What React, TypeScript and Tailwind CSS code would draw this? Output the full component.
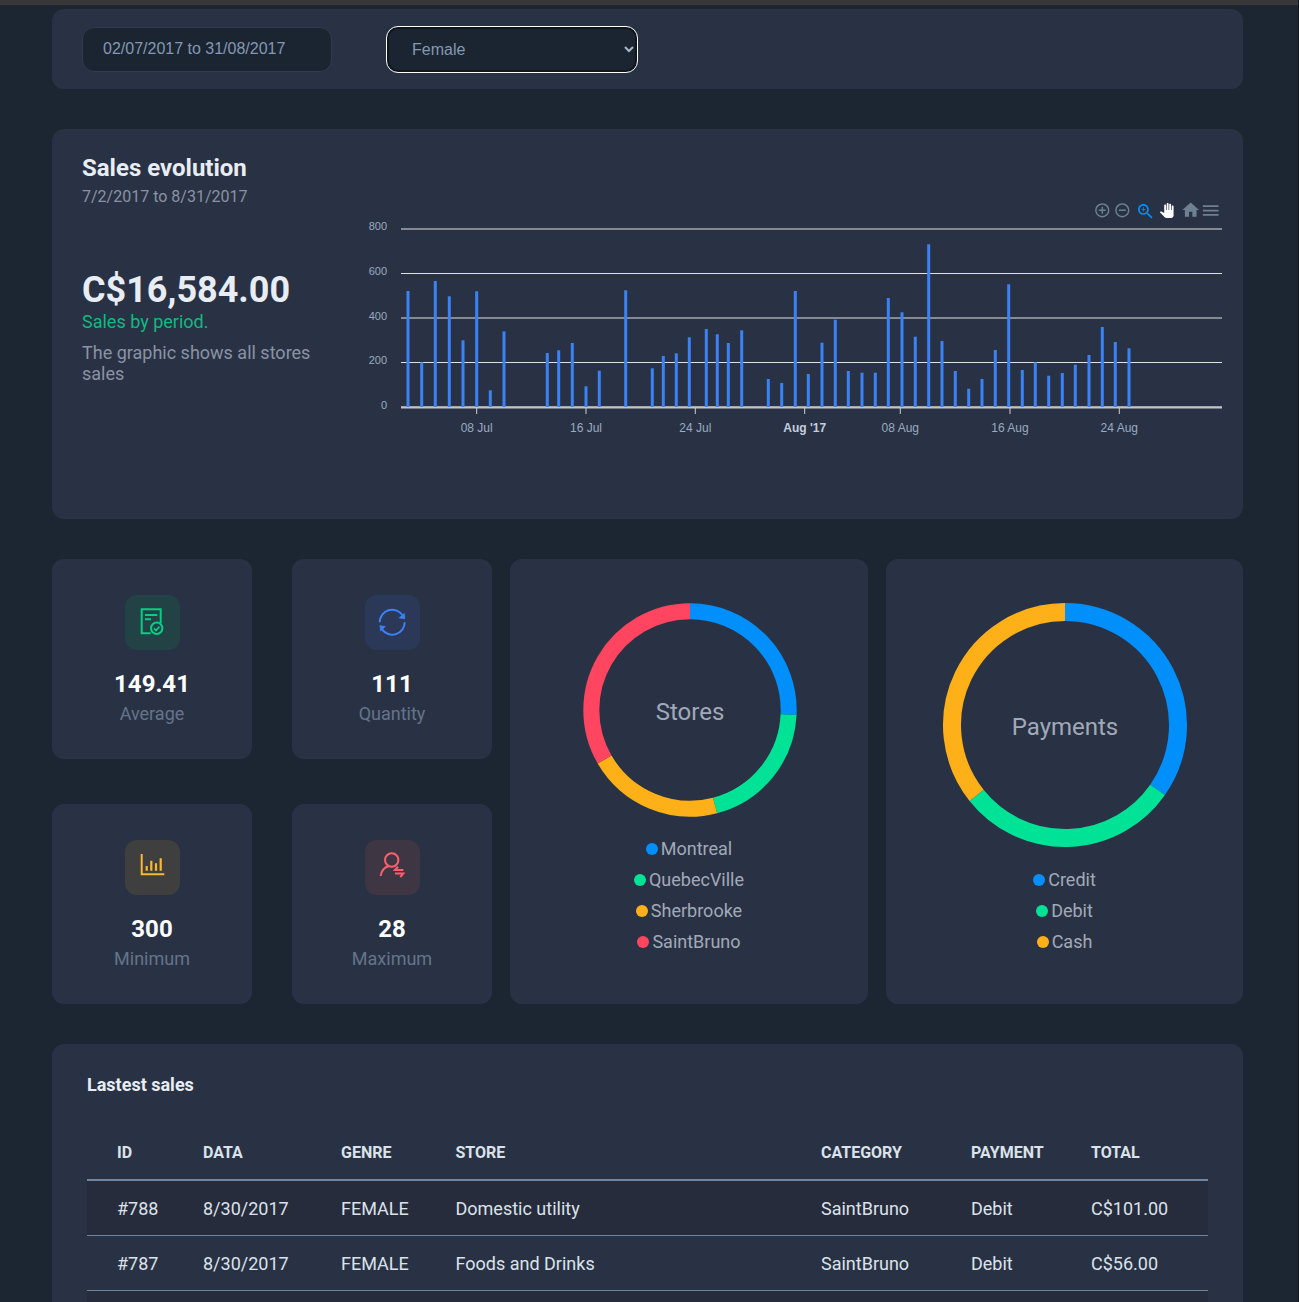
import React from "react";

const BARS: [number, number][] = [
  [408, 291], [421.7, 362.3], [435.3, 281], [449.3, 296.3], [463, 340.3], [476.7, 291.3], [490.3, 390.3], [504, 331.3],
  [547.3, 353], [558.7, 350.3], [572.3, 343], [586, 386.3], [599.3, 370.7], [625.7, 290.3], [652.3, 368.3], [663.3, 356],
  [676.3, 353.3], [689.3, 337.3], [706.3, 329], [717.3, 334.3], [728.3, 343], [741.7, 330.3], [768.3, 379], [781.7, 383],
  [795.3, 291], [808.3, 374], [822, 342.7], [835.3, 319.7], [848.3, 371], [862, 372.7], [875.3, 372.7], [888.3, 298],
  [902, 312.3], [915.3, 336.7], [928.7, 244.3], [942, 341], [955.3, 371], [968.7, 388.7], [982, 379], [995.3, 350],
  [1008.7, 284.3], [1022.3, 370], [1035.3, 362.3], [1048.7, 375.7], [1062.3, 373], [1075.3, 364.7], [1089, 355],
  [1102.3, 327], [1115.3, 342], [1129, 348.3],
];
const GRID = [
  [229, "800", 230],
  [273.5, "600", 275],
  [318, "400", 320],
  [362.5, "200", 364],
  [407, "0", 409],
] as const;
const TICKS: [number, string, boolean][] = [
  [476.7, "08 Jul", false], [586, "16 Jul", false], [695.3, "24 Jul", false], [804.7, "Aug '17", true],
  [900.3, "08 Aug", false], [1010, "16 Aug", false], [1119.3, "24 Aug", false],
];

function arc(cx: number, cy: number, r: number, a0: number, a1: number) {
  const p = (a: number) => {
    const t = ((a - 90) * Math.PI) / 180;
    return `${(cx + r * Math.cos(t)).toFixed(2)} ${(cy + r * Math.sin(t)).toFixed(2)}`;
  };
  return `M${p(a0)}A${r} ${r} 0 ${a1 - a0 > 180 ? 1 : 0} 1 ${p(a1)}`;
}

function TIcon({ x, y, s, fill, d }: { x: number; y: number; s: number; fill: string; d: string }) {
  return (
    <svg x={x - s / 2} y={y - s / 2} width={s} height={s} viewBox="0 0 24 24">
      <path d={d} fill={fill} />
    </svg>
  );
}

function SalesChart() {
  const font = { fontFamily: '"Liberation Sans", Arial, sans-serif' };
  return (
    <svg width="870" height="250" viewBox="360 195 870 250" className="block shrink-0">
      {GRID.map(([y, label, ty]) => (
        <g key={label}>
          <line x1="401" x2="1222" y1={y} y2={y} stroke="#e0e0e0" strokeWidth="1" />
          <text x="387" y={ty} textAnchor="end" fontSize="11" fill="#9aaac0" style={font}>{label}</text>
        </g>
      ))}
      <line x1="401" x2="1222" y1="407.5" y2="407.5" stroke="#c4c4c4" strokeWidth="2" />
      {TICKS.map(([x, label, bold]) => (
        <g key={label}>
          <line x1={x} x2={x} y1="408" y2="414" stroke="#d0d0d0" strokeWidth="1" />
          <text x={x} y="432" textAnchor="middle" fontSize="12" fontWeight={bold ? 700 : 400} fill={bold ? "#c3cedd" : "#9aaac0"} style={font}>{label}</text>
        </g>
      ))}
      {BARS.map(([x, top]) => (
        <rect key={x} x={x - 1.5} y={top} width="3" height={407 - top} fill="#3b82f6" />
      ))}
      <TIcon x={1102.3} y={210.3} s={17} fill="#6e8192" d="M13 7h-2v4H7v2h4v4h2v-4h4v-2h-4V7zm-1-5C6.48 2 2 6.48 2 12s4.48 10 10 10 10-4.48 10-10S17.52 2 12 2zm0 18c-4.41 0-8-3.59-8-8s3.59-8 8-8 8 3.59 8 8-3.59 8-8 8z" />
      <TIcon x={1122.3} y={210.3} s={17} fill="#6e8192" d="M7 11v2h10v-2H7zm5-9C6.48 2 2 6.48 2 12s4.48 10 10 10 10-4.48 10-10S17.52 2 12 2zm0 18c-4.41 0-8-3.59-8-8s3.59-8 8-8 8 3.59 8 8-3.59 8-8 8z" />
      <TIcon x={1145.5} y={211.5} s={20} fill="#008ffb" d="M15.5 14h-.79l-.28-.27C15.41 12.59 16 11.11 16 9.5 16 5.91 13.09 3 9.5 3S3 5.91 3 9.5 5.91 16 9.5 16c1.61 0 3.09-.59 4.23-1.57l.27.28v.79l5 4.99L20.49 19l-4.99-5zm-6 0C7.01 14 5 11.99 5 9.5S7.01 5 9.5 5 14 7.01 14 9.5 11.99 14 9.5 14zM12 10h-2v2H9v-2H7V9h2V7h1v2h2v1z" />
      <TIcon x={1166.7} y={210.5} s={15} fill="#ffffff" d="M23 5.5V20c0 2.2-1.8 4-4 4h-7.3c-1.08 0-2.1-.43-2.85-1.19L1 14.83s1.26-1.23 1.3-1.25c.22-.19.49-.29.79-.29.22 0 .42.06.6.16.04.01 4.31 2.46 4.31 2.46V4c0-.83.67-1.5 1.5-1.5S11 3.17 11 4v7h1V1.5c0-.83.67-1.5 1.5-1.5S15 .67 15 1.5V11h1V2.5c0-.83.67-1.5 1.5-1.5s1.5.67 1.5 1.5V11h1V5.5c0-.83.67-1.5 1.5-1.5s1.5.67 1.5 1.5z" />
      <TIcon x={1190.7} y={210} s={20} fill="#6e8192" d="M10 20v-6h4v6h5v-8h3L12 3 2 12h3v8z" />
      <TIcon x={1210.7} y={210.5} s={21} fill="#6e8192" d="M3 18h18v-2H3v2zm0-5h18v-2H3v2zm0-7v2h18V6H3z" />
    </svg>
  );
}

function Stat({ icon, box, value, label }: { icon: React.ReactNode; box: string; value: string; label: string }) {
  return (
    <div className="flex h-[200px] w-[200px] flex-col items-center rounded-xl bg-[#293244] pt-9">
      <div className={`h-[55px] w-[55px] rounded-xl ${box}`}>
        <svg width="55" height="55" viewBox="0 0 55 55" fill="none" className="block">{icon}</svg>
      </div>
      <div className="mt-5 text-2xl font-bold leading-7 text-white">{value}</div>
      <div className="mt-[2px] text-lg leading-7 text-[#64748b]">{label}</div>
    </div>
  );
}

function Donut({ size, title, cx, cy, r, sw, segs, legend, legendTop, ty }: {
  size: number; title: string; cx: number; cy: number; r: number; sw: number; ty: number;
  segs: [number, number, string][]; legend: [string, string][]; legendTop: string;
}) {
  return (
    <div className="flex h-[445px] flex-1 flex-col items-center rounded-xl bg-[#293244]">
      <svg width={size} height={size} viewBox={`0 0 ${size} ${size}`} className="block h-auto shrink-0">
        {segs.map(([a, b, c]) => (
          <path key={c} d={arc(cx, cy, r, a, b)} fill="none" stroke={c} strokeWidth={sw} />
        ))}
        <text x={cx} y={cy + ty} textAnchor="middle" fontSize={24} fill="#a1a9b8" style={{ fontFamily: "Roboto, sans-serif" }}>{title}</text>
      </svg>
      <div className={`flex flex-col items-center ${legendTop}`}>
        {legend.map(([n, c]) => (
          <div key={n} className="flex h-[31px] items-center gap-[3px] text-lg text-[#a1a9b8]">
            <span className="h-3 w-3 rounded-full" style={{ background: c }} />
            {n}
          </div>
        ))}
      </div>
    </div>
  );
}

const TH = ["ID", "DATA", "GENRE", "STORE", "CATEGORY", "PAYMENT", "TOTAL"];
const ROWS = [
  ["#788", "8/30/2017", "FEMALE", "Domestic utility", "SaintBruno", "Debit", "C$101.00"],
  ["#787", "8/30/2017", "FEMALE", "Foods and Drinks", "SaintBruno", "Debit", "C$56.00"],
];

export default function App() {
  return (
    <div className="h-[1302px] overflow-hidden border-r border-[#10161d] bg-[#1b2632]" style={{ fontFamily: "Roboto, sans-serif" }}>
      <div className="h-[5px] bg-[#383838]" />
      <div className="ml-[52px] flex w-[1191px] flex-col gap-10 pt-1">
        <div className="flex h-20 items-center gap-[54px] rounded-xl bg-[#293244] pl-[30px]">
          <div className="flex h-[45px] w-[250px] items-center rounded-xl border border-[#2f3b4f] bg-[#1b2431] pl-5 text-base text-[#8398b2]" style={{ fontFamily: '"Liberation Sans", Arial, sans-serif' }}>
            02/07/2017 to 31/08/2017
          </div>
          <div className="flex h-[47px] w-[252px] items-center justify-between rounded-xl border-[1.5px] border-white bg-[#1b2431] pl-[25px] pr-[3px] pt-[2px] text-base text-[#8398b2] ring-2 ring-inset ring-[#11161d]" style={{ fontFamily: '"Liberation Sans", Arial, sans-serif' }}>
            Female
            <svg width="10" height="8" viewBox="0 0 10 8" className="-mt-[2px]"><path d="M1 2l4 4 4-4" fill="none" stroke="#a9b8c9" strokeWidth="2" /></svg>
          </div>
        </div>

        <div className="flex h-[390px] items-start rounded-xl bg-[#293244] pl-[30px]">
          <div className="w-[278px] shrink-0 pt-[25px]">
            <h2 className="text-2xl font-bold leading-7 text-[#e8edf3]">Sales evolution</h2>
            <p className="mt-[3px] text-base leading-6 text-[#8a93a3]">7/2/2017 to 8/31/2017</p>
            <p className="mt-[61px] text-4xl font-bold leading-10 text-[#e8edf3]">C$16,584.00</p>
            <p className="text-lg leading-6 text-[#10b981]">Sales by period.</p>
            <p className="mt-2 w-[240px] text-lg leading-[21px] text-[#8a93a3]">The graphic shows all stores sales</p>
          </div>
          <div className="mt-[66px]"><SalesChart /></div>
        </div>

        <div className="flex gap-[18px]">
          <div className="grid w-[440px] shrink-0 grid-cols-[200px_200px] justify-between gap-y-[45px]">
            <Stat value="149.41" label="Average" box="bg-[#234245]" icon={
              <g stroke="#00d084" strokeWidth="2">
                <path d="M25.7 38.3H16.7V14.3H35.7V28.3" />
                <path d="M20 20H32.3M20 24.3H26" />
                <circle cx="31.7" cy="33.3" r="5.7" />
                <path d="M28.9 33.4l2.1 2.1 3.4-3.9" strokeWidth="1.6" />
              </g>
            } />
            <Stat value="111" label="Quantity" box="bg-[#2b3858]" icon={
              <g transform="translate(12.2 12.2)" stroke="#3b82f6" strokeWidth="2">
                <path d="M2.5 15A12.5 12.5 0 0 1 25.2 7.8" />
                <path d="M27.5 15A12.5 12.5 0 0 1 4.8 22.2" />
                <path d="M21.7 10.7L27.3 6L27.7 11.7Z M2.7 18.3L8.3 19.3L3.3 24Z" fill="#3b82f6" strokeWidth="0.5" />
              </g>
            } />
            <Stat value="300" label="Minimum" box="bg-[#403f3f]" icon={
              <g stroke="#fbb82e">
                <path d="M16.7 14V34.3H39.3" strokeWidth="2" />
                <path d="M21.7 26V30.7M26.3 20.7V30.7M31 23.3V30.7M35.7 18.3V30.7" strokeWidth="2.2" />
              </g>
            } />
            <Stat value="28" label="Maximum" box="bg-[#3f3644]" icon={
              <g stroke="#ff5f6d" strokeWidth="2">
                <circle cx="26.7" cy="20" r="6.7" />
                <path d="M15.7 36C16.3 31 19.5 27.3 24 26" />
                <path d="M38.3 30H30l3-3.3M30 33.5H38.3l-3 3.7" />
              </g>
            } />
          </div>
          <Donut size={358} title="Stores" cx={180} cy={151} r={98.7} sw={16} ty={10} legendTop="-mt-[84px]"
            segs={[[0, 92.7, "#008ffb"], [92.7, 165.3, "#00e396"], [165.3, 239.9, "#feb019"], [239.9, 360, "#ff4560"]]}
            legend={[["Montreal", "#008ffb"], ["QuebecVille", "#00e396"], ["Sherbrooke", "#feb019"], ["SaintBruno", "#ff4560"]]} />
          <Donut size={357} title="Payments" cx={179} cy={166} r={113} sw={18} ty={10} legendTop="-mt-[52px]"
            segs={[[0, 125, "#008ffb"], [125, 231.5, "#00e396"], [231.5, 360, "#feb019"]]}
            legend={[["Credit", "#008ffb"], ["Debit", "#00e396"], ["Cash", "#feb019"]]} />
        </div>

        <div className="h-[300px] rounded-t-xl bg-[#293244] px-[35px] pt-[30px]">
          <h3 className="text-lg font-bold leading-[22px] text-[#e8edf3]">Lastest sales</h3>
          <table className="mt-[30px] w-[1121px] table-fixed border-collapse text-left text-lg text-[#dbe2ea]">
            <colgroup>
              <col className="w-[116px]" /><col className="w-[138px]" /><col className="w-[114.5px]" /><col className="w-[365.5px]" /><col className="w-[150px]" /><col className="w-[120px]" /><col />
            </colgroup>
            <thead>
              <tr className="h-[54px] border-b-2 border-[#6f849e]">
                {TH.map((h, i) => (
                  <th key={h} className={`text-base font-bold ${i === 0 ? "pl-[30px]" : ""}`}>{h}</th>
                ))}
              </tr>
            </thead>
            <tbody>
              {ROWS.map((r, k) => (
                <tr key={k} className={`h-[55px] border-b border-[#6f849e] ${k === 0 ? "bg-[#262c3b]" : ""}`}>
                  {r.map((c, i) => (
                    <td key={i} className={`pt-[2px] ${i === 0 ? "pl-[30px]" : ""}`}>{c}</td>
                  ))}
                </tr>
              ))}
              <tr className="h-[55px] bg-[#262c3b]"><td colSpan={7} /></tr>
            </tbody>
          </table>
        </div>
      </div>
    </div>
  );
}
